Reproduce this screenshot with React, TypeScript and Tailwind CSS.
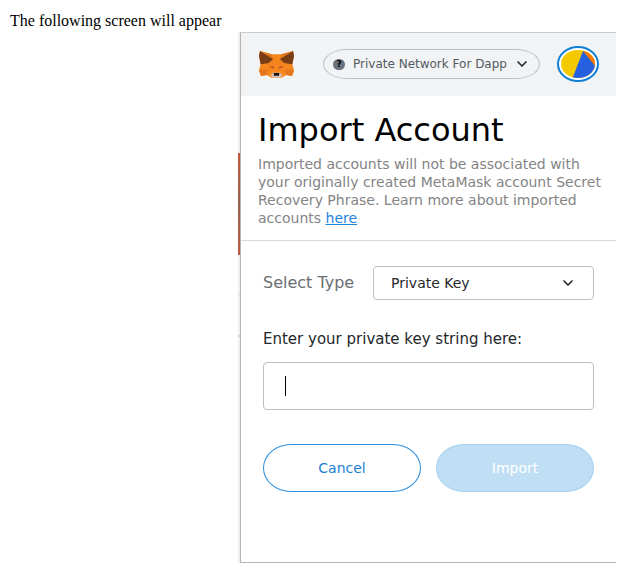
import { ChevronDown } from 'lucide-react';

function Fox() {
  return (
    <svg viewBox="0 0 105 84" className="h-7 w-[35px]" role="img" aria-label="MetaMask">
      <path d="M3 3 37 13H68L102 3 105 17 100 43 105 61 99 78 82 75 67 83H38L23 75 6 78 0 61 5 43 0 17Z" fill="#f6851b" />
      <path d="M3 3 43 27 30 39 5 43 0 17Z" fill="#763d16" />
      <path d="M102 3 62 27 75 39 100 43 105 17Z" fill="#763d16" />
      <path d="M3 3 43 27 37 13Z M102 3 62 27 68 13Z" fill="#e2761b" />
      <path d="M27 42 43 27 47 55 40 61Z M78 42 62 27 58 55 65 61Z" fill="#f18220" />
      <path d="M28 50 43 48 46 56Z M77 50 62 48 59 56Z" fill="#cd6116" />
      <path d="M37 52 43 52 44 55Z M68 52 62 52 61 55Z" fill="#47505a" />
      <path d="M0 61 27 59 23 75 6 78Z M105 61 78 59 82 75 99 78Z" fill="#e4761b" />
      <path d="M5 43 26 48 27 59Z M100 43 79 48 78 59Z" fill="#f28a27" />
      <path d="M34 76 42 68 63 68 71 76 62 83H43Z" fill="#d7c1b3" />
      <path d="M44 69H61L60 77H45Z" fill="#161616" />
    </svg>
  );
}

function Avatar() {
  return (
    <svg viewBox="0 0 42 36" className="h-9 w-[42px]" aria-hidden="true">
      <defs>
        <clipPath id="avatar-face"><ellipse cx="21" cy="18" rx="17" ry="14" /></clipPath>
      </defs>
      <ellipse cx="21" cy="18" rx="20" ry="17" fill="#fff" stroke="#1080d6" strokeWidth="2" />
      <g clipPath="url(#avatar-face)">
        <path d="M0 0H42V36H0Z" fill="#f5c900" />
        <path d="M26 5 28 0H42V28Z" fill="#fa7900" />
        <path d="M26 5 14 36H42V25Z" fill="#2460e0" />
      </g>
    </svg>
  );
}

export default function App() {
  return (
    <main className="bg-white font-['DejaVu_Sans',sans-serif]">
      <p className="px-[10px] pt-3 pb-[2px] font-['Liberation_Serif',serif] text-base leading-[18px] text-black">
        The following screen will appear
      </p>
      <div className="mr-[17px] ml-[238px] flex">
        <div className="flex w-[2px] flex-col bg-[#eeeeee]" aria-hidden="true">
          <div className="mt-[121px] h-[102px] bg-gradient-to-b from-[#c4583c] via-[#94614f] to-[#bb5c41]" />
          <div className="mt-[39px] h-px bg-gray-300" />
          <div className="mt-10 h-[2px] bg-gray-300" />
        </div>
        <section className="min-w-0 flex-1 border-y border-l border-t-[#c8cacc] border-b-[#b5b5b5] border-l-[#b5b5b5] pb-[70px]">
          <header className="flex items-center bg-[#f2f3f4] pt-[13px] pr-[17px] pb-[14px] pl-[18px]">
            <Fox />
            <button type="button" className="mr-[17px] ml-auto flex h-[30px] w-[217px] items-center rounded-[24px/15px] border border-[#bbc0c5] pr-[9px] pl-[9px] text-xs text-[#535a61]">
              <span className="flex h-[11px] w-3 items-center justify-center rounded-full bg-[#6a737d] text-[9px] font-bold text-black">?</span>
              <span className="ml-2 whitespace-nowrap">Private Network For Dapp</span>
              <ChevronDown className="ml-auto size-4 text-[#24272a]" strokeWidth={2.5} aria-hidden="true" />
            </button>
            <button type="button" aria-label="Account menu"><Avatar /></button>
          </header>
          <div className="border-b border-[#d6d9dc] pt-4 pr-3 pb-[13px] pl-[17px]">
            <h1 className="text-[32px] leading-9 text-black">Import Account</h1>
            <p className="mt-[7px] text-sm leading-[18px] text-[#848484]">
              Imported accounts will not be associated with your originally created MetaMask account Secret Recovery Phrase. Learn more about imported accounts{' '}
              <a href="#learn-more" className="text-[#1c85da] underline">here</a>
            </p>
          </div>
          <form className="px-[22px] pt-[25px]">
            <div className="flex items-center justify-between">
              <label htmlFor="import-type" className="text-base text-[#6a6e72]">Select Type</label>
              <div className="relative w-[221px]">
                <select id="import-type" className="h-[34px] w-full appearance-none rounded-[4px] border border-[#bbc0c5] bg-white px-[17px] text-sm text-[#24272a]">
                  <option>Private Key</option>
                </select>
                <ChevronDown className="pointer-events-none absolute top-[9px] right-[18px] size-4 text-[#24272a]" strokeWidth={2.5} aria-hidden="true" />
              </div>
            </div>
            <label htmlFor="private-key" className="mt-7 block text-[15px] leading-[22px] text-[#24272a]">Enter your private key string here:</label>
            <div className="relative mt-3">
              <input id="private-key" type="text" className="block h-12 w-full rounded-[4px] border border-[#bbc0c5] px-[21px] outline-none" />
              <span className="absolute top-[14px] left-[22px] h-5 w-px bg-black" aria-hidden="true" />
            </div>
            <div className="mt-[34px] grid grid-cols-2 gap-[15px] text-sm">
              <button type="button" className="h-12 rounded-[28px/24px] border border-[#2b8fdd] text-[#1c7fd4]">Cancel</button>
              <button type="submit" disabled className="h-12 rounded-[28px/24px] border border-[#a5d0f0] bg-[#c0def4] text-white">Import</button>
            </div>
          </form>
        </section>
      </div>
    </main>
  );
}
